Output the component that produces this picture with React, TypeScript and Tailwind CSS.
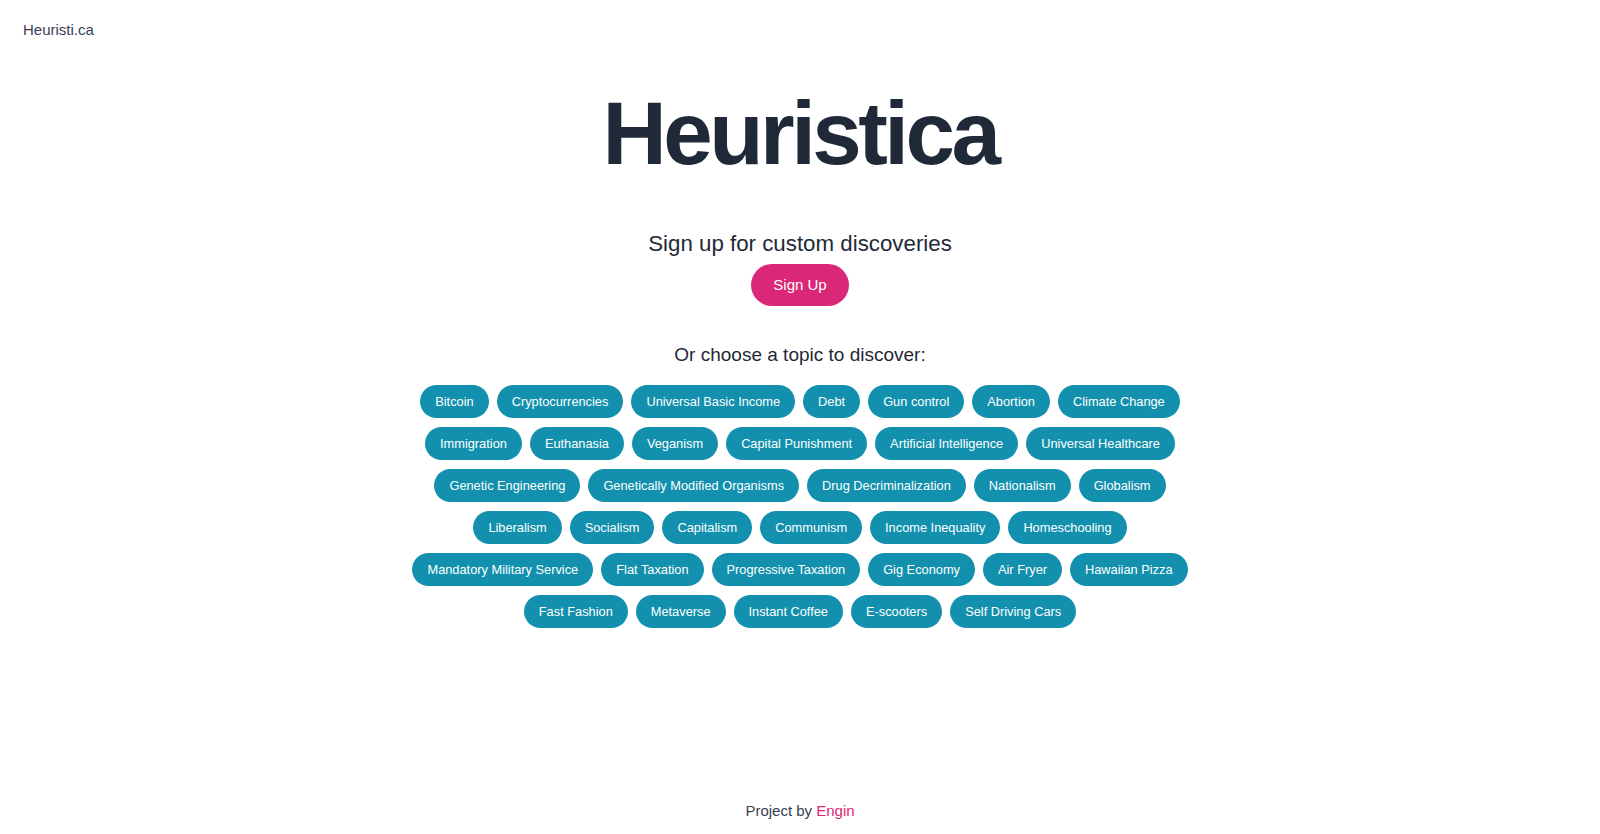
const rows: string[][] = [
  ["Bitcoin", "Cryptocurrencies", "Universal Basic Income", "Debt", "Gun control", "Abortion", "Climate Change"],
  ["Immigration", "Euthanasia", "Veganism", "Capital Punishment", "Artificial Intelligence", "Universal Healthcare"],
  ["Genetic Engineering", "Genetically Modified Organisms", "Drug Decriminalization", "Nationalism", "Globalism"],
  ["Liberalism", "Socialism", "Capitalism", "Communism", "Income Inequality", "Homeschooling"],
  ["Mandatory Military Service", "Flat Taxation", "Progressive Taxation", "Gig Economy", "Air Fryer", "Hawaiian Pizza"],
  ["Fast Fashion", "Metaverse", "Instant Coffee", "E-scooters", "Self Driving Cars"],
];

function TopicPill({ label }: { label: string }) {
  return (
    <button className="h-[33px] rounded-full bg-[#1290ad] px-[15px] text-[12.8px] leading-[33px] text-white whitespace-nowrap">
      {label}
    </button>
  );
}

export default function App() {
  return (
    <div className="flex h-[834px] flex-col bg-white font-['Liberation_Sans',Arial,sans-serif] text-[#1f2937]">
      <header className="px-[23px] pt-[20px] text-[15px] leading-5 text-[#374151]">
        Heuristi.ca
      </header>

      <main className="flex flex-1 flex-col items-center">
        <h1 className="mt-[49px] text-[89px] font-bold leading-none tracking-[-0.04em] text-[#1f2937]">
          Heuristica
        </h1>

        <p className="mt-[52px] text-[22.3px] leading-7 text-[#1f2937]">
          Sign up for custom discoveries
        </p>
        <button className="mt-[6px] h-[42px] rounded-full bg-[#db2777] px-[22px] text-[15px] text-white">
          Sign Up
        </button>

        <p className="mt-[37px] text-[19px] leading-6 text-[#1f2937]">
          Or choose a topic to discover:
        </p>

        <div className="mt-[18px] flex flex-col gap-[9px]">
          {rows.map((row, i) => (
            <div key={i} className="flex justify-center gap-2">
              {row.map((t) => (
                <TopicPill key={t} label={t} />
              ))}
            </div>
          ))}
        </div>
      </main>

      <footer className="pb-[13px] text-center text-[15px] leading-5 text-[#374151]">
        Project by <a className="text-[#db2777]">Engin</a>
      </footer>
    </div>
  );
}
